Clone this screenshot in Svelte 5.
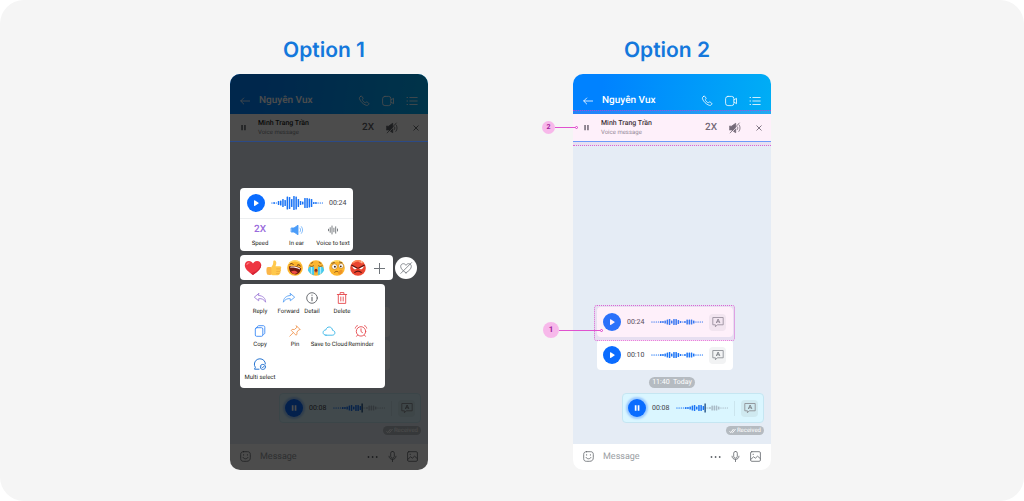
<script>
  const contact = 'Nguyên Vux';
  const shortWave = [1, 1, 1, 1, 2, 2, 3, 5, 6, 3, 6, 6, 4, 2, 1, 2, 5, 5, 5, 3, 1, 1, 1, 1];
  const tallWave = [1, 2, 1, 4, 5, 8, 6, 13, 12, 8, 14, 13, 8, 4, 3, 10, 10, 9, 8, 2, 2, 1, 1, 1];
  const playedBars = 13;

  const audioActions = [
    { id: 'speed', label: 'Speed' },
    { id: 'ear', label: 'In ear' },
    { id: 'text', label: 'Voice to text' },
  ];
  const reactions = ['heart', 'thumb', 'laugh', 'cry', 'dizzy', 'angry', 'plus'];
  const menuRows = [
    { name: 'first', items: ['Reply', 'Forward', 'Detail', 'Delete'] },
    { name: 'second', items: ['Copy', 'Pin', 'Save to Cloud', 'Reminder'] },
    { name: 'third', items: ['Multi select'] },
  ];
</script>

{#snippet wave(bars, height, progress)}
  <svg class="wave" viewBox="0 0 52 {height}" height={height} aria-hidden="true">
    {#each bars as h, i}
      <rect
        x={0.2 + i * 2.2}
        y={(height - h) / 2}
        width="1.5"
        height={h}
        rx="0.5"
        fill={progress && i >= playedBars ? '#a9bac6' : '#1a73f5'}
      />
    {/each}
    {#if progress}
      <rect x="28.4" y="0.5" width="1.5" height={height - 1} fill="#315f91" />
    {/if}
  </svg>
{/snippet}

{#snippet playButton(paused)}
  <button class="play" class:active={!paused} aria-label={paused ? 'Play' : 'Pause'}>
    <svg viewBox="0 0 18 18" width="18" height="18">
      {#if paused}
        <path d="M7 6.7v4.800c0 .4.4.6.7.4l3.8-2.500c.3-.2.3-.5 0-.7L7.700 6.300c-.3-.2-.7 0-.7.4z" fill="#fff" />
      {:else}
        <path d="M6.800 6.300h1.700v5.400H6.800zM9.700 6.300h1.700v5.400H9.700z" fill="#fff" />
      {/if}
    </svg>
  </button>
{/snippet}

{#snippet bubble(time, paused, own)}
  <div class="bubble" class:own>
    {@render playButton(paused)}
    <span class="time">{time}</span>
    {@render wave(shortWave, 10, own)}
    {#if own}<span class="divider"></span>{/if}
    <button class="convert" aria-label="Convert to text">
      <svg viewBox="0 0 12 12" width="12" height="12" fill="none" stroke="#8d9196" stroke-width="0.9" stroke-linejoin="round">
        <path d="M.8 1.500h10.400v7.300H5.300L3.400 10.800V8.800H.8z" />
        <path d="M4.300 7 6.100 3l1.800 4M4.900 5.800h2.400" stroke="#7a7f84" />
      </svg>
    </button>
  </div>
{/snippet}

{#snippet pin(number, kind)}
  <div class="pin {kind}">
    <span class="badge">{number}</span>
    <span class="lead"></span>
    <span class="ring"></span>
  </div>
{/snippet}

{#snippet reaction(kind)}
  <svg viewBox="0 0 18 18" width="18" height="18" aria-hidden="true">
    {#if kind === 'heart'}
      <path d="M9 16C4 12.600.8 9.600.8 6.200.8 3.600 2.700 2 4.900 2 6.700 2 8.200 3 9 4.500 9.800 3 11.300 2 13.100 2c2.200 0 4.100 1.600 4.100 4.200C17.200 9.600 14 12.600 9 16z" fill="#ee3641" />
      <path d="M3 5.500c.2-1 .9-1.600 2-1.700" stroke="#ff8086" stroke-width="1.200" stroke-linecap="round" fill="none" />
      <path d="M9 16c5-3.400 8.200-6.400 8.200-9.800 0-.7-.1-1.300-.4-1.800C16.300 9 13.500 12 7 14.600z" fill="#d42435" />
    {:else if kind === 'thumb'}
      <path d="M6.200 8.200C7.900 6.300 8.300 4.800 8.300 2.500c0-1.600 2.800-1.500 3 1 .1 1.500-.3 2.500-.8 3.700h4.100c1.900 0 2.100 2.100.9 2.700 1 .7.8 2.100-.3 2.500.7.8.3 2-.7 2.200.2 1.100-.6 1.600-1.800 1.600H8.300c-1.100 0-2-.7-3-1z" fill="#ffc94d" />
      <path d="M1.800 8.500c1.500-.6 3.200-.6 4.600-.2v7.200c-1.400.7-3 .7-4.300.1-.8-2.300-.9-4.800-.3-7.100z" fill="#fbb648" />
      <path d="M11.700 9.900h3.600M11.700 12.400h3.300M11.500 14.600h2.700" stroke="#eba53c" stroke-width=".7" stroke-linecap="round" />
    {:else if kind === 'cry'}
      <circle cx="9" cy="9" r="7.800" fill="#fcb632" />
      <path d="M2.200 7.700h4.900v8.600C4.400 15.600 2 14 .8 11zM10.900 7.700h4.900L17.200 11c-1.200 3-3.600 4.600-6.300 5.300z" fill="#43c9ee" />
      <path d="M4.500 8v6.800M13.500 8v6.800" stroke="#a5ecfb" stroke-width="1.300" />
      <path d="M2.900 6.800c1 .9 2.600.9 3.600 0M11.500 6.800c1 .9 2.600.9 3.600 0M4.200 4.300l1.600-.8M13.800 4.300l-1.600-.8" stroke="#6b3b10" stroke-width=".7" stroke-linecap="round" fill="none" />
      <ellipse cx="9" cy="11.600" rx="1.500" ry="1.800" fill="#8d2c1c" />
      <path d="M8.100 12.800c.5-.5 1.300-.5 1.800 0-.5.700-1.300.7-1.800 0z" fill="#f0685a" />
    {:else if kind === 'laugh'}
      <circle cx="9" cy="9" r="7.800" fill="#fdb52e" />
      <path d="M3.500 4C6 1.300 11 1 14 3.500" stroke="#ffdc6b" stroke-width="1.300" stroke-linecap="round" fill="none" />
      <g transform="rotate(12 9 9)">
        <path d="M3 8.600c3.900-1.700 8.300-1.900 12.100-.5.2 4.400-2.300 7.200-5.700 7.200-3.500 0-6.100-2.600-6.400-6.700z" fill="#6e1a12" />
        <path d="M4.100 8.700c3.300-1.200 6.700-1.300 9.900-.3v1c-3.200-.8-6.500-.7-9.600.2z" fill="#fff" />
        <path d="M5.900 13.300c1.600-1.900 4.700-2.100 6.700-.4-1.700 2.600-4.900 2.800-6.700.4z" fill="#ef4d45" />
        <path d="M3.300 6.400c.7-1.300 2.200-1.500 3.200-.5M10.600 5.800c.9-1.100 2.500-1 3.300.2" stroke="#5d300c" stroke-width=".9" stroke-linecap="round" fill="none" />
      </g>
    {:else if kind === 'dizzy'}
      <circle cx="9" cy="9" r="7.800" fill="#fdb62e" />
      <path d="M3.300 4.200C6 1.200 11.500 1.200 14.400 3.700" stroke="#ffdf6f" stroke-width="1.300" stroke-linecap="round" fill="none" />
      <circle cx="6.500" cy="7.600" r="2.700" fill="#fff" stroke="#a3661b" stroke-width=".5" />
      <circle cx="13.100" cy="6.900" r="2.400" fill="#fff" stroke="#a3661b" stroke-width=".5" />
      <circle cx="6.900" cy="7.700" r="1" fill="#3d2413" />
      <circle cx="12.800" cy="7.300" r=".9" fill="#3d2413" />
      <path d="M3.700 4.300l2.600-.8M11.500 3l2.400.7M6.700 13.200c1.200-1.100 2.600-1.100 3.500-.3" stroke="#6b3b10" stroke-width=".8" stroke-linecap="round" fill="none" />
      <path d="M11.500 11.500c1.200-1.300 2.900-.8 3.100.6.100 2-1.600 3.600-3.500 3.400-1.200-.5-1.200-1.700-.4-2.300z" fill="#ef9426" />
    {:else if kind === 'angry'}
      <circle cx="9" cy="9" r="7.800" fill="#ea4530" />
      <path d="M4 3.800c2.800-2.500 6.900-2.600 9.900-.2" stroke="#ff8b59" stroke-width="1.500" stroke-linecap="round" fill="none" />
      <path d="M3.200 6.900l4.700 2.300c-.7 1.700-3.900 1.500-4.700-2.300zM14.800 6.900l-4.700 2.300c.7 1.700 4 1.500 4.700-2.300z" fill="#fff" />
      <path d="M2.800 6.300l5.400 2.700M15.200 6.300L9.800 9M5.800 13.400c1.900-1.600 4.500-1.600 6.400 0" stroke="#581410" stroke-width="1.200" stroke-linecap="round" fill="none" />
      <path d="M10.300 2.600l1.300 1.300M12.600 1.900v2.400" stroke="#ffd2bd" stroke-width=".7" />
    {:else}
      <path d="M9.500 4v11M4 9.500h11" stroke="#70757a" stroke-width="1" />
    {/if}
  </svg>
{/snippet}

{#snippet actionIcon(kind)}
  <svg viewBox="0 0 14 14" width="14" height="14" fill="none" stroke-width="0.9" stroke-linecap="round" stroke-linejoin="round" aria-hidden="true">
    {#if kind === 'ear'}
      <path d="M1.500 5h2.500l4-2.800v9.600L4 9H1.500z" fill="#4b9cf8" stroke="#4b9cf8" />
      <path d="M10 5.100c.8 1.100.8 2.700 0 3.800M11.400 3.600c1.700 2 1.700 4.800 0 6.800" stroke="#7ab8fb" />
    {:else if kind === 'text'}
      <path d="M2.500 6.200v1.600M4.200 4.700v4.600M6 3v8M7.900 5.200v3.600M9.700 3.800v6.400M11.500 6v2" stroke="#6c7075" />
    {:else if kind === 'Reply'}
      <path d="M5.700 2.500 1.300 6.200l4.400 3.600V7.700c3.300-.4 5.300.8 6.900 3.500-.1-4-2.600-6.500-6.900-6.700z" stroke="#a07ed8" />
    {:else if kind === 'Forward'}
      <path d="M8.300 2.500l4.400 3.700-4.400 3.600V7.700c-3.300-.4-5.300.8-6.900 3.500.1-4 2.600-6.500 6.900-6.700z" stroke="#5aa2f4" />
    {:else if kind === 'Detail'}
      <circle cx="7" cy="7" r="5.300" stroke="#5d6166" />
      <path d="M7 6.300v3.500M7 4v.3" stroke="#5d6166" stroke-width="1.100" />
    {:else if kind === 'Delete'}
      <path d="M2.300 3.500h9.400M5.100 3.300V1.600h3.800v1.700M3.300 3.700v8.700h7.400V3.700M5.800 6v4M8.200 6v4" stroke="#e5484d" />
    {:else if kind === 'Copy'}
      <rect x="2.300" y="3.700" width="7.500" height="8.600" rx="1.300" stroke="#3c8af5" />
      <path d="M4.300 3.400c0-1.100.5-1.700 1.500-1.700h4.300c1.100 0 1.700.6 1.700 1.700v5.400c0 1-.6 1.600-1.500 1.700" stroke="#3c8af5" />
    {:else if kind === 'Pin'}
      <path d="M8.500 1.900l3.700 3.700-1.300.2-2 2.300.1 2.300-1 .8-4.800-4.800.9-1 2.300.1 2.300-2zM5.300 8.600l-3.500 3.600" stroke="#f29a57" />
    {:else if kind === 'Save to Cloud'}
      <path d="M4 11.200h6.200c1.600 0 2.700-1 2.700-2.400 0-1.300-1-2.300-2.300-2.400C10.300 4.300 9 3 7.200 3 5.500 3 4.200 4.200 3.900 5.900 2.200 6 1.100 7.100 1.100 8.600c0 1.500 1.200 2.600 2.900 2.600z" stroke="#38b6e8" />
    {:else if kind === 'Reminder'}
      <circle cx="7" cy="7.400" r="4.700" stroke="#e5484d" />
      <path d="M7 4.800v2.800l1.500 1M1.300 4.100c.2-1.200.9-2 2.100-2.400M12.700 4.100c-.2-1.200-.9-2-2.100-2.400M3.500 11.200l-.9 1.100M10.500 11.200l.9 1.100" stroke="#e5484d" />
    {:else}
      <path d="M6 12.200H1.500l.9-1.900C1.600 9.300 1.300 8.100 1.400 7c.2-3 2.500-5.200 5.500-5.200 3.100 0 5.500 2.400 5.500 5.100" stroke="#2775d2" stroke-width="1" />
      <circle cx="9.900" cy="9.900" r="2.600" stroke="#2775d2" />
      <path d="M8.700 9.900l.9.900 1.500-1.700" stroke="#2775d2" />
    {/if}
  </svg>
{/snippet}

{#snippet phone(annotated)}
  <div class="phone">
    <header class="top">
      <button aria-label="Back">
        <svg viewBox="0 0 10 10" width="10" height="10" class="line"><path d="M9.700 5H.8M3.700 2 .7 5l3 3" /></svg>
      </button>
      <h2>{contact}</h2>
      <div class="tools">
        <button aria-label="Call">
          <svg viewBox="0 0 12 12" width="12" height="12" class="line"><path d="M2.700 1.300c.5-.4 1-.2 1.300.3l.9 1.300c.3.500.2.900-.2 1.300-.5.500-.4.800.1 1.500.6.800 1.200 1.400 1.900 1.800.5.300.9.200 1.200-.2.400-.4.900-.5 1.300-.2l1.400 1c.5.400.5.900.1 1.300-.7.900-1.700 1.300-2.800.8C5 9 2.600 6.700 1.500 3.900c-.4-1.100.1-2 1.200-2.600z" /></svg>
        </button>
        <button aria-label="Video call">
          <svg viewBox="0 0 12 12" width="12" height="12" class="line"><rect x=".6" y="1.400" width="8.300" height="9.200" rx="2.300" /><path d="M9 4.900l2.500-1.600v5.400L9 7.100" /></svg>
        </button>
        <button aria-label="Conversation details">
          <svg viewBox="0 0 12 12" width="12" height="12" class="line"><path d="M1 2.500h.6M1 6h.6M1 9.500h.6M3.800 2.500h7.400M3.800 6h7.400M3.800 9.500h7.400" /></svg>
        </button>
      </div>
    </header>
    <section class="player" class:dimmed={!annotated} aria-label="Now playing">
      <button aria-label="Pause playback">
        <svg viewBox="0 0 7 7" width="7" height="7"><path d="M1.300 1h1.500v5.200H1.300zM4.200 1h1.500v5.200H4.200z" fill="#5b5f64" /></svg>
      </button>
      <div class="track">
        <strong>Minh Trang Trần</strong>
        <span>Voice message</span>
      </div>
      <div class="tools">
        <button class="rate">2X</button>
        <button aria-label="Speaker off">
          <svg viewBox="0 0 12 12" width="12" height="12" fill="none" stroke="#5f6368" stroke-width=".8" stroke-linecap="round">
            <path d="M.6 4.200h2L6.700 1.300v9.400L2.600 7.900h-2z" fill="#5f6368" />
            <path d="M8.300 4.400c.8.900.8 2.300 0 3.200M9.900 2.600c1.600 1.900 1.600 4.900 0 6.800" />
            <path d="M11 1.400 1.900 11.300" stroke="#fff" stroke-width=".8" />
            <path d="M10.300 1 1.200 10.900" />
          </svg>
        </button>
        <button aria-label="Close player">
          <svg viewBox="0 0 12 12" width="12" height="12" stroke="#5f6368" stroke-width=".9"><path d="M3.500 3.500l5 5M8.500 3.500l-5 5" /></svg>
        </button>
      </div>
    </section>
    <div class="chat">
      <div class="spot">
        {@render bubble('00:24', true, false)}
        {#if annotated}
          <div class="zone message-zone">{@render pin(1, 'large')}</div>
        {/if}
      </div>
      {@render bubble('00:10', true, false)}
      <span class="day">11:40&nbsp; Today</span>
      {@render bubble('00:08', false, true)}
      <span class="status">
        <svg viewBox="0 0 7 6" width="7" height="6" fill="none" stroke="#fff" stroke-width=".9"><path d="M.5 3.200l1.300 1.500L4.500 1M3.200 4.400l.4.300L6.500 1" /></svg>
        Received
      </span>
    </div>
    <footer class="composer">
      <button aria-label="Stickers">
        <svg viewBox="0 0 11 11" width="11" height="11" class="line"><path d="M3.500.7h4c1.900 0 2.800.9 2.800 2.800v3.200c0 2.300-1.300 3.600-3.600 3.600H3.500C1.600 10.300.7 9.400.7 7.500v-4C.7 1.600 1.600.7 3.500.7z" /><path d="M3.600 3.600v.6M7.400 3.600v.6M3 6.400c1 2 4 2 5 0" /></svg>
      </button>
      <input type="text" placeholder="Message" aria-label="Message" />
      <button aria-label="More">
        <svg viewBox="0 0 11 11" width="11" height="11" fill="#5f6368"><circle cx="1.500" cy="6" r=".9" /><circle cx="5.600" cy="6" r=".9" /><circle cx="9.700" cy="6" r=".9" /></svg>
      </button>
      <button aria-label="Record voice">
        <svg viewBox="0 0 11 11" width="11" height="11" class="line"><rect x="3.700" y=".4" width="3.600" height="6.800" rx="1.800" /><path d="M2 5.200c0 4.400 7 4.400 7 0M5.500 8.600v2" /></svg>
      </button>
      <button aria-label="Send picture">
        <svg viewBox="0 0 11 11" width="11" height="11" class="line"><rect x=".6" y=".7" width="9.800" height="9.600" rx="1.200" /><path d="M.9 8.300l2.700-2.500 1.700 1.400 2.300-2 2.600 2.300M3 3.300h.5" /></svg>
      </button>
    </footer>
    {#if annotated}
      <div class="zone player-zone">{@render pin(2, 'small')}</div>
    {:else}
      <div class="shade">
        <section class="card audio">
          <div class="audio-row">
            {@render playButton(true)}
            {@render wave(tallWave, 14, false)}
            <span class="time">00:24</span>
          </div>
          <div class="audio-actions">
            {#each audioActions as action}
              <button class="action">
                {#if action.id === 'speed'}<b class="speed">2X</b>{:else}{@render actionIcon(action.id)}{/if}
                <span>{action.label}</span>
              </button>
            {/each}
          </div>
        </section>
        <div class="reaction-row">
          <div class="card reactions">
            {#each reactions as kind}
              <button aria-label={kind === 'plus' ? 'More reactions' : kind}>{@render reaction(kind)}</button>
            {/each}
          </div>
          <button class="clear" aria-label="Remove reaction">
            <svg viewBox="0 0 14 14" width="14" height="14" fill="none" stroke="#6d7278" stroke-width=".8" stroke-linecap="round"><path d="M7 11.800C3.800 9.700 1.700 7.800 1.700 5.400c0-1.600 1.100-2.700 2.600-2.700 1.200 0 2.100.6 2.700 1.600.6-1 1.500-1.600 2.700-1.600 1.500 0 2.600 1.100 2.600 2.700 0 2.400-2.100 4.300-5.300 6.400z" /><path d="M12.600 1.600 1.800 12.400" /></svg>
          </button>
        </div>
        <section class="card menu">
          {#each menuRows as row}
            <div class="menu-row {row.name}">
              {#each row.items as item}
                <button class="action">{@render actionIcon(item)}<span>{item}</span></button>
              {/each}
            </div>
          {/each}
        </section>
      </div>
    {/if}
  </div>
{/snippet}

<main class="board">
  <section class="option">
    <h1>Option 1</h1>
    {@render phone(false)}
  </section>
  <section class="option">
    <h1>Option 2</h1>
    {@render phone(true)}
  </section>
</main>

<style>
  :global(body) {
    margin: 0;
    background: #fff;
  }
  .board {
    box-sizing: border-box;
    min-height: 100vh;
    padding: 39px 23px 31px 0;
    display: flex;
    justify-content: center;
    align-items: flex-start;
    gap: 145px;
    background: #f5f5f5;
    border-radius: 24px;
    font-family: Roboto, sans-serif;
    text-rendering: geometricPrecision;
    color: #1c1e21;
  }
  .option {
    flex: 0 0 auto;
  }
  h1 {
    margin: 0 0 11px;
    padding-right: 10px;
    font: 600 21px/24px Inter, sans-serif;
    text-align: center;
    color: #1478dc;
  }
  button {
    margin: 0;
    padding: 0;
    border: 0;
    background: none;
    color: inherit;
    font: inherit;
    text-rendering: inherit;
    display: flex;
    align-items: center;
    justify-content: center;
    flex-shrink: 0;
  }
  svg {
    display: block;
  }
  .line {
    fill: none;
    stroke: currentColor;
    stroke-width: 0.8;
    stroke-linecap: round;
    stroke-linejoin: round;
  }
  .phone {
    position: relative;
    width: 198px;
    border-radius: 10px;
  }
  .top {
    display: flex;
    align-items: center;
    gap: 9px;
    height: 27px;
    padding: 13px 10px 0 10px;
    border-radius: 10px 10px 0 0;
    background: linear-gradient(100deg, #0082ff 15%, #00aef5);
    color: #fff;
  }
  h2 {
    margin: 0;
    flex: 1;
    font-size: 10px;
    font-weight: 500;
    line-height: 12px;
  }
  .tools {
    display: flex;
    align-items: center;
    gap: 12px;
  }
  .tools button {
    width: 12px;
    height: 12px;
  }
  .player {
    position: relative;
    display: flex;
    align-items: center;
    gap: 11px;
    height: 27px;
    padding: 0 6px 1px 10px;
    background: #fff;
  }
  .player::after {
    content: '';
    position: absolute;
    inset: auto 0 0;
    z-index: 1;
    height: 1px;
    background: #6c9bfa;
  }
  .player.dimmed::after {
    background: #2c4a86;
  }
  .track {
    flex: 1;
    display: flex;
    flex-direction: column;
    line-height: 9px;
    font-size: 6px;
    color: #83878c;
  }
  .track strong {
    font-size: 7px;
    font-weight: 500;
    color: #1c1e21;
  }
  .rate {
    font-size: 10px;
    font-weight: 500;
    color: #5f6368;
  }
  .chat {
    box-sizing: border-box;
    min-height: 302px;
    padding: 0 7px 9px 24px;
    display: flex;
    flex-direction: column;
    justify-content: flex-end;
    background: #e5ecf5;
  }
  .spot {
    position: relative;
    align-self: flex-start;
    margin-bottom: 3px;
  }
  .bubble {
    box-sizing: border-box;
    align-self: flex-start;
    display: flex;
    align-items: center;
    gap: 6px;
    height: 30px;
    padding: 0 7px 0 6px;
    border-radius: 4px;
    background: #fff;
  }
  .bubble.own {
    align-self: flex-end;
    padding: 0 5px;
    border: 1px solid #c5e6f2;
    background: #daf6ff;
  }
  .play {
    width: 18px;
    height: 18px;
    border-radius: 50%;
    background: #0a6cff;
  }
  .play.active {
    box-shadow: 0 0 2px 2px #9dcbff;
  }
  .time {
    width: 18px;
    font-size: 7px;
    line-height: 10px;
    color: #3c4045;
  }
  .wave {
    width: 52px;
    flex-shrink: 0;
  }
  .divider {
    width: 1px;
    height: 15px;
    background: #cbe5ee;
  }
  .convert {
    width: 17px;
    height: 17px;
    border-radius: 4px;
    background: #f2f3f4;
  }
  .own .convert {
    background: #cfe9f0;
  }
  .day,
  .status {
    border-radius: 6px;
    background: #b5bbc1;
    color: #fff;
  }
  .day {
    align-self: center;
    margin: 7px 17px 5px 0;
    padding: 0 3px;
    font-size: 7px;
    line-height: 11px;
  }
  .status {
    align-self: flex-end;
    display: flex;
    align-items: center;
    gap: 1px;
    margin-top: 3px;
    padding: 0 3px;
    font-size: 6px;
    line-height: 9px;
  }
  .composer {
    display: flex;
    align-items: center;
    gap: 9px;
    height: 25px;
    padding: 0 10px 1px;
    border-radius: 0 0 10px 10px;
    background: #fff;
    color: #5f6368;
  }
  .composer input {
    flex: 1;
    min-width: 0;
    padding: 0;
    border: 0;
    background: none;
    font: 9px/12px Roboto, sans-serif;
    text-rendering: inherit;
  }
  .composer input::placeholder {
    color: #9a9ea3;
    opacity: 1;
  }
  .zone {
    position: absolute;
    box-sizing: border-box;
    background: rgba(250, 150, 220, 0.14);
    border: 1px dotted rgba(214, 50, 200, 0.7);
  }
  .player-zone {
    inset: 36px 0 auto;
    height: 36px;
    border-width: 1px 0;
  }
  .message-zone {
    inset: -2px -2px -4px -3px;
    border-radius: 3px;
  }
  .pin {
    position: absolute;
    display: flex;
    align-items: center;
    color: #a3219a;
    font-weight: 700;
    text-align: center;
  }
  .badge {
    border-radius: 50%;
    background: #f7b8ea;
  }
  .lead {
    height: 1px;
    background: #e052cf;
  }
  .ring {
    width: 1px;
    height: 1px;
    border: 1px solid #dc3ac8;
    border-radius: 50%;
    background: #fff;
  }
  .pin.small {
    top: 10px;
    left: -31px;
    font-size: 7px;
    line-height: 13px;
  }
  .small .badge {
    width: 13px;
  }
  .small .lead {
    width: 20px;
  }
  .pin.large {
    top: 16px;
    left: -52px;
    font-size: 8px;
    line-height: 16px;
  }
  .large .badge {
    width: 16px;
  }
  .large .lead {
    width: 41px;
  }
  .shade {
    position: absolute;
    inset: 0;
    box-sizing: border-box;
    padding: 114px 10px 0;
    display: flex;
    flex-direction: column;
    align-items: flex-start;
    gap: 4px;
    border-radius: 10px;
    background: rgba(0, 0, 0, 0.7);
  }
  .card {
    border-radius: 4px;
    background: #fff;
  }
  .audio-row {
    display: flex;
    align-items: center;
    gap: 6px;
    height: 30px;
    padding: 0 6px 0 7px;
    border-bottom: 1px solid #eceef0;
  }
  .audio-actions {
    display: grid;
    grid-template-columns: 36px 37px 36px;
    padding: 4px 2px 3px;
  }
  .action {
    flex-direction: column;
    gap: 2px;
    font-size: 6px;
    line-height: 9px;
    color: #1c1e21;
    white-space: nowrap;
  }
  .speed {
    font-size: 10px;
    font-weight: 500;
    line-height: 14px;
    color: #9a6bdc;
  }
  .reaction-row {
    display: flex;
    align-items: center;
    gap: 2px;
  }
  .reactions {
    display: flex;
    align-items: center;
    gap: 3px;
    height: 25px;
    padding: 0 5px 0 4px;
  }
  .clear {
    width: 22px;
    height: 22px;
    border-radius: 50%;
    background: #fff;
  }
  .menu {
    width: 145px;
    padding: 7px 0 4px;
  }
  .menu-row {
    display: grid;
    align-items: start;
    height: 33px;
  }
  .menu-row.first {
    grid-template-columns: 40px 17px 30px 30px;
  }
  .menu-row.second {
    grid-template-columns: 40px 30px 38px 26px;
  }
  .menu-row.third {
    grid-template-columns: 40px;
    height: 27px;
  }
  .menu-row .action {
    justify-self: center;
  }
</style>
